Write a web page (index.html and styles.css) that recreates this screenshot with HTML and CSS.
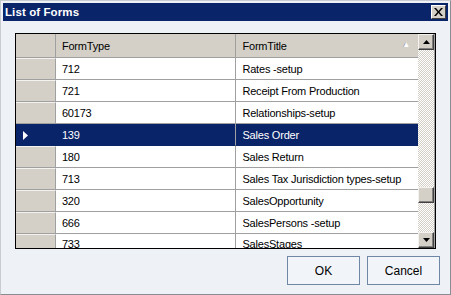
FILE: index.html
```html
<!DOCTYPE html>
<html>
<head>
<meta charset="utf-8">
<link rel="stylesheet" href="styles.css">
</head>
<body>
<div class="window">
  <div class="titlebar">
    <span class="title">List of Forms</span>
    <span class="close"><svg width="9" height="8" viewBox="0 0 9 8"><path d="M0 0h2l2.5 3 2.5-3h2L5.5 4 9 8H7L4.5 5 2 8H0l3.5-4z" fill="#000"/></svg></span>
  </div>
  <div class="content">
    <div class="grid">
      <div class="table">
        <div class="row head">
          <div class="rh"></div>
          <div class="c1">FormType</div>
          <div class="c2">FormTitle<span class="sort">▲</span></div>
        </div>
        <div class="row"><div class="rh"></div><div class="c1">712</div><div class="c2">Rates -setup</div></div>
        <div class="row"><div class="rh"></div><div class="c1">721</div><div class="c2">Receipt From Production</div></div>
        <div class="row"><div class="rh"></div><div class="c1">60173</div><div class="c2">Relationships-setup</div></div>
        <div class="row sel"><div class="rh"><svg width="6" height="9" viewBox="0 0 6 9"><path d="M1 0l5 4.5L1 9z" fill="#fff"/></svg></div><div class="c1">139</div><div class="c2">Sales Order</div></div>
        <div class="row"><div class="rh"></div><div class="c1">180</div><div class="c2">Sales Return</div></div>
        <div class="row"><div class="rh"></div><div class="c1">713</div><div class="c2">Sales Tax Jurisdiction types-setup</div></div>
        <div class="row"><div class="rh"></div><div class="c1">320</div><div class="c2">SalesOpportunity</div></div>
        <div class="row"><div class="rh"></div><div class="c1">666</div><div class="c2">SalesPersons -setup</div></div>
        <div class="row last"><div class="rh"></div><div class="c1">733</div><div class="c2">SalesStages</div></div>
      </div>
      <div class="scroll">
        <div class="sbtn"><svg width="7" height="4" viewBox="0 0 7 4"><path d="M3.5 0L7 4H0z" fill="#000"/></svg></div>
        <div class="track top"></div>
        <div class="thumb"></div>
        <div class="track bottom"></div>
        <div class="sbtn"><svg width="7" height="4" viewBox="0 0 7 4"><path d="M0 0h7L3.5 4z" fill="#000"/></svg></div>
      </div>
    </div>
    <div class="buttons">
      <div class="btn">OK</div>
      <div class="btn">Cancel</div>
    </div>
  </div>
</div>
</body>
</html>
```
FILE: styles.css
```css
html, body { margin: 0; padding: 0; }
body { width: 451px; height: 295px; overflow: hidden; }
.window {
  width: 451px; height: 295px; box-sizing: border-box;
  background: #eef1f5;
  border: 1px solid #c8ccd2;
  border-right-color: #8a8e94; border-bottom-color: #8a8e94;
  padding: 2px 2px 0 2px;
  font-family: "Liberation Sans", Arial, sans-serif;
  font-size: 11px; letter-spacing: -0.2px; color: #000;
}
.titlebar {
  height: 18px; background: #0a246a;
  display: flex; align-items: center; justify-content: space-between;
  padding: 0 2px 0 2px;
}
.title {
  color: #fff; font-family: "Liberation Sans", Arial, sans-serif;
  font-weight: bold; font-size: 11.5px; letter-spacing: 0.1px;
}
.close {
  width: 15px; height: 14px; box-sizing: border-box;
  background: #d4d0c8;
  border: 1px solid; border-color: #fff #404040 #404040 #fff;
  display: flex; align-items: center; justify-content: center;
}
.content { padding: 12px 0 0 12px; }
.grid {
  width: 421px; height: 216px; box-sizing: border-box;
  border: 1px solid #000;
  display: flex; background: #fff;
}
.table { width: 403px; height: 214px; overflow: hidden; }
.row { display: flex; height: 22px; }
.row > div {
  box-sizing: border-box; height: 22px;
  border-bottom: 1px solid #a0a0a0;
  display: flex; align-items: center;
  white-space: nowrap;
}
.row.last > div { align-items: flex-start; padding-top: 4px; }
.rh { width: 40px; background: #d4d0c8; border-right: 1px solid #a0a0a0; border-top: 1px solid #f4f2ee; padding-left: 6px; }
.c1 { width: 181px; border-right: 1px solid #a0a0a0; padding-left: 6px; }
.c2 { width: 182px; padding-left: 6px; }
.row.head { height: 24px; }
.row.head > div { height: 24px; background: #d4d0c8; border-bottom: 1px solid #a0a0a0; border-top: 0; }
.row.head .c1 { border-right: 1px solid #a0a0a0; }
.row.head .c2 { position: relative; }
.sort { position: absolute; right: 8px; top: 6px; font-size: 8px; color: #fff; text-shadow: -1px 0 #aaa; }
.row.sel > div { background: #0a246a; color: #fff; border-bottom-color: #0a246a; }
.row.sel .rh { border-top-color: #0a246a; border-right-color: #0a246a; }
.scroll {
  width: 16px; height: 214px; display: flex; flex-direction: column;
  background: repeating-conic-gradient(#d4d0c8 0 25%, #fff 0 50%) 0 0 / 2px 2px;
  border-right: 1px solid #a0a0a0;
}
.sbtn, .thumb {
  width: 16px; height: 16px; box-sizing: border-box;
  background: #d4d0c8;
  border: 1px solid; border-color: #f4f2ee #404040 #404040 #f4f2ee;
  box-shadow: inset -1px -1px #808080;
  display: flex; align-items: center; justify-content: center;
}
.track.top { height: 137px; }
.track.bottom { flex: 1; }
.buttons { display: flex; justify-content: flex-end; gap: 7px; padding: 7px 8px 0 0; }
.btn {
  width: 73px; height: 29px; box-sizing: border-box;
  border: 1px solid #6f86a5; background: #f1f4f8;
  display: flex; align-items: center; justify-content: center;
  font-size: 12px; letter-spacing: 0;
}
```
